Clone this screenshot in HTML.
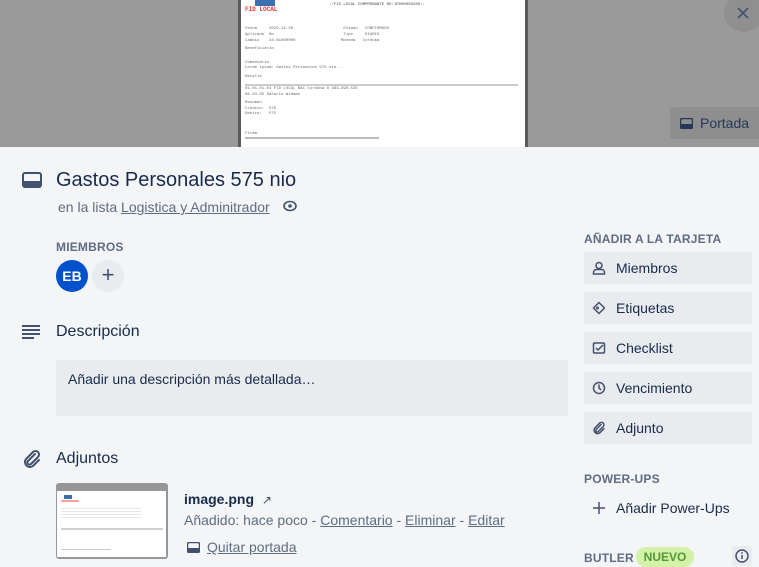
<!DOCTYPE html>
<html><head><meta charset="utf-8"><style>
*{margin:0;padding:0;box-sizing:border-box}
body{width:759px;height:559px;overflow:hidden;background:#f4f5f7;font-family:"Liberation Sans",sans-serif;color:#172b4d;position:relative;font-size:14px}
.abs{position:absolute}
.cover{left:0;top:0;width:759px;height:147px;background:#9a9a9a}
.doc{left:238px;top:0;width:290px;height:147px;background:#fff;border-left:3px solid #5b5b5b;border-right:3px solid #5b5b5b}
.doc .l{position:absolute;height:2px;background:#ccc}
.doc .t{position:absolute;font-family:"Liberation Mono",monospace;font-size:4px;color:#666;white-space:nowrap}
.close{left:724px;top:-6px;width:40px;height:38px;border-radius:50%;background:#8f8f8f}
.portada{left:670px;top:107px;width:95px;height:32px;background:#8e8e8e;border-radius:3px;color:#253858;font-size:14px;padding:8px 0 0 30px}
.side{left:584px;width:168px;height:32px;background:#e9ebee;border-radius:3px;font-size:14px;color:#172b4d;padding:8px 0 0 32px}
.lbl{font-size:12px;font-weight:bold;color:#5e6c84;letter-spacing:.2px}
u{color:#5e6c84}
.ic{position:absolute;left:8px;top:9px}
</style></head><body>
<div class="abs cover"></div>
<div class="abs doc">
 <div style="position:absolute;left:14px;top:0;width:20px;height:6px;background:#3a6fb0"></div>
 <div class="t" style="left:4px;top:6px;color:#e33;font-size:6px;font-weight:bold">FID LOCAL</div>
 <div class="t" style="left:88px;top:3px;color:#444">::FID LOCAL COMPROBANTE NO:JE00000328S::</div>
 <div class="t" style="left:4px;top:27px">Fecha &nbsp; &nbsp; 2020-12-28 &nbsp; &nbsp; &nbsp; &nbsp; &nbsp; &nbsp; &nbsp; &nbsp; &nbsp; &nbsp; Estado &nbsp; CONFIRMADO</div>
 <div class="t" style="left:4px;top:33px">Aplicado &nbsp;No &nbsp; &nbsp; &nbsp; &nbsp; &nbsp; &nbsp; &nbsp; &nbsp; &nbsp; &nbsp; &nbsp; &nbsp; &nbsp; &nbsp; Tipo &nbsp; &nbsp; DIARIO</div>
 <div class="t" style="left:4px;top:39px">Cambio &nbsp; &nbsp;34.81000000 &nbsp; &nbsp; &nbsp; &nbsp; &nbsp; &nbsp; &nbsp; &nbsp; &nbsp; Moneda &nbsp; Cordoba</div>
 <div class="t" style="left:4px;top:47px">Beneficiario</div>
 <div class="t" style="left:4px;top:61px">Comentario</div>
 <div class="t" style="left:4px;top:66px">Lorem ipsum: Gastos Personales 575 nio...</div>
 <div class="t" style="left:4px;top:75px">Detalle</div>
 <div class="l" style="left:4px;top:84px;width:273px"></div>
 <div class="t" style="left:4px;top:87px">01-01-01-01 FID LOCAL BAC Cordoba # 363-390-535</div>
 <div class="t" style="left:4px;top:93px">06-03-05 Salario Widman</div>
 <div class="t" style="left:4px;top:101px">Resumen</div>
 <div class="t" style="left:4px;top:107px">Credito: &nbsp;575</div>
 <div class="t" style="left:4px;top:112px">Debito: &nbsp; 575</div>
 <div class="t" style="left:4px;top:132px">Firma</div>
 <div class="l" style="left:4px;top:137px;width:134px;background:#bbb"></div>
</div>
<div class="abs close"><svg style="position:absolute;left:12px;top:12px" width="14" height="14" viewBox="0 0 14 14"><path d="M2 2L12 12M12 2L2 12" stroke="#42526e" stroke-width="1.6"/></svg></div>
<div class="abs portada"><svg style="position:absolute;left:10px;top:11px" width="13" height="11"><rect x="0.5" y="0.5" width="12" height="10" rx="1.5" fill="none" stroke="#253858" stroke-width="1.5"/><rect x="1" y="6" width="11" height="4" fill="#253858"/></svg>Portada</div>

<svg class="abs" style="left:22px;top:172px" width="20" height="16"><rect x="1" y="1" width="18" height="14" rx="2" fill="none" stroke="#42526e" stroke-width="2"/><rect x="1" y="9" width="18" height="6" fill="#42526e"/></svg>
<div class="abs" style="left:56px;top:169px;font-size:20px;color:#172b4d">Gastos Personales 575 nio</div>
<div class="abs" style="left:58px;top:199px;font-size:14px;color:#5e6c84">en la lista <u>Logistica y Adminitrador</u></div>
<svg class="abs" style="left:283px;top:200px" width="14" height="12"><ellipse cx="7" cy="6" rx="6" ry="4.5" fill="none" stroke="#42526e" stroke-width="1.6"/><circle cx="7" cy="6" r="1.8" fill="#42526e"/></svg>

<div class="abs lbl" style="left:56px;top:240px">MIEMBROS</div>
<div class="abs" style="left:56px;top:260px;width:32px;height:32px;border-radius:50%;background:#0052cc;color:#fff;font-size:14px;font-weight:bold;text-align:center;line-height:32px">EB</div>
<div class="abs" style="left:92px;top:260px;width:32px;height:32px;border-radius:50%;background:#e9ebee;color:#42526e;font-size:22px;text-align:center;line-height:30px">+</div>

<svg class="abs" style="left:22px;top:325px" width="19" height="15"><path d="M0 1H18M0 5H18M0 9H18M0 13H12" stroke="#42526e" stroke-width="2"/></svg>
<div class="abs" style="left:56px;top:323px;font-size:16px">Descripción</div>
<div class="abs" style="left:56px;top:360px;width:512px;height:56px;background:#e9ebee;border-radius:3px;padding:11px 12px;font-size:14px;color:#172b4d">Añadir una descripción más detallada…</div>

<svg class="abs" style="left:22px;top:449px" width="20" height="20" viewBox="0 0 20 20"><path d="M13 5L6 12a2 2 0 0 0 3 3l7-7a3.5 3.5 0 0 0-5-5L4 10a5 5 0 0 0 7 7l6-6" fill="none" stroke="#42526e" stroke-width="2" stroke-linecap="round"/></svg>
<div class="abs" style="left:56px;top:450px;font-size:16px">Adjuntos</div>
<div class="abs" style="left:56px;top:483px;width:112px;height:76px;background:#979797;border-radius:3px"><div style="position:absolute;left:1px;top:8px;width:109px;height:66px;background:#fff"><div style="position:absolute;left:7px;top:4px;width:8px;height:4px;background:#3a6fb0"></div><div style="position:absolute;left:4px;top:9px;width:18px;height:2px;background:#f4a0a0"></div><div style="position:absolute;left:4px;top:15px;width:80px;height:14px;background:repeating-linear-gradient(#fff 0 2px,#e6e6e6 2px 3px)"></div><div style="position:absolute;left:4px;top:37px;width:102px;height:2px;background:#d0d0d0"></div><div style="position:absolute;left:4px;top:58px;width:50px;height:1px;background:#ccc"></div></div></div>
<div class="abs" style="left:184px;top:491px;font-size:14px;font-weight:bold">image.png <span style="font-weight:normal;font-size:12px;color:#42526e;margin-left:4px">↗</span></div>
<div class="abs" style="left:184px;top:512px;font-size:14px;color:#5e6c84">Añadido: hace poco - <u>Comentario</u> - <u>Eliminar</u> - <u>Editar</u></div>
<svg class="abs" style="left:187px;top:542px" width="13" height="11"><rect x="0.5" y="0.5" width="12" height="10" rx="1.5" fill="none" stroke="#42526e" stroke-width="1.5"/><rect x="1" y="6" width="11" height="4" fill="#42526e"/></svg>
<div class="abs" style="left:207px;top:539px;font-size:14px;color:#5e6c84"><u>Quitar portada</u></div>

<div class="abs lbl" style="left:584px;top:232px">AÑADIR A LA TARJETA</div>
<div class="abs side" style="top:252px"><svg class="ic" width="14" height="14"><circle cx="7" cy="4.5" r="3" fill="none" stroke="#42526e" stroke-width="1.5"/><path d="M1.5 13v-1.5a3 3 0 0 1 3-3h5a3 3 0 0 1 3 3V13z" fill="none" stroke="#42526e" stroke-width="1.5"/></svg>Miembros</div>
<div class="abs side" style="top:292px"><svg class="ic" width="14" height="14"><path d="M7 1.5L12.5 7 7 12.5 1.5 7z" fill="none" stroke="#42526e" stroke-width="1.5" stroke-linejoin="round"/><circle cx="5.5" cy="7" r="1.5" fill="#42526e"/></svg>Etiquetas</div>
<div class="abs side" style="top:332px"><svg class="ic" width="14" height="14"><rect x="1.5" y="2" width="11" height="10" rx="1" fill="none" stroke="#42526e" stroke-width="1.5"/><path d="M4 7l2 2 5-5" fill="none" stroke="#42526e" stroke-width="1.5"/></svg>Checklist</div>
<div class="abs side" style="top:372px"><svg class="ic" width="14" height="14"><circle cx="7" cy="7" r="5.5" fill="none" stroke="#42526e" stroke-width="1.5"/><path d="M7 3.5V7l2 2" fill="none" stroke="#42526e" stroke-width="1.5"/></svg>Vencimiento</div>
<div class="abs side" style="top:412px"><svg class="ic" width="14" height="14" viewBox="0 0 20 20"><path d="M13 5L6 12a2 2 0 0 0 3 3l7-7a3.5 3.5 0 0 0-5-5L4 10a5 5 0 0 0 7 7l6-6" fill="none" stroke="#42526e" stroke-width="2.2" stroke-linecap="round"/></svg>Adjunto</div>
<div class="abs lbl" style="left:584px;top:472px">POWER-UPS</div>
<div class="abs" style="left:584px;top:492px;width:168px;height:32px;padding:8px 0 0 32px;font-size:14px"><svg class="ic" width="14" height="14"><path d="M7 1V13M1 7H13" stroke="#42526e" stroke-width="1.5"/></svg>Añadir Power-Ups</div>
<div class="abs lbl" style="left:584px;top:551px">BUTLER</div>
<div class="abs" style="left:636px;top:547px;width:58px;height:20px;background:#d3f1a7;border-radius:10px;color:#519839;font-size:12px;font-weight:bold;text-align:center;line-height:20px">NUEVO</div>
<div class="abs" style="left:732px;top:546px;width:20px;height:20px;background:#ebecf0;border-radius:3px"><svg style="position:absolute;left:3px;top:3px" width="14" height="14"><circle cx="7" cy="7" r="6" fill="none" stroke="#42526e" stroke-width="1.5"/><path d="M7 6V10" stroke="#42526e" stroke-width="1.5"/><circle cx="7" cy="4" r="0.9" fill="#42526e"/></svg></div>
</body></html>
